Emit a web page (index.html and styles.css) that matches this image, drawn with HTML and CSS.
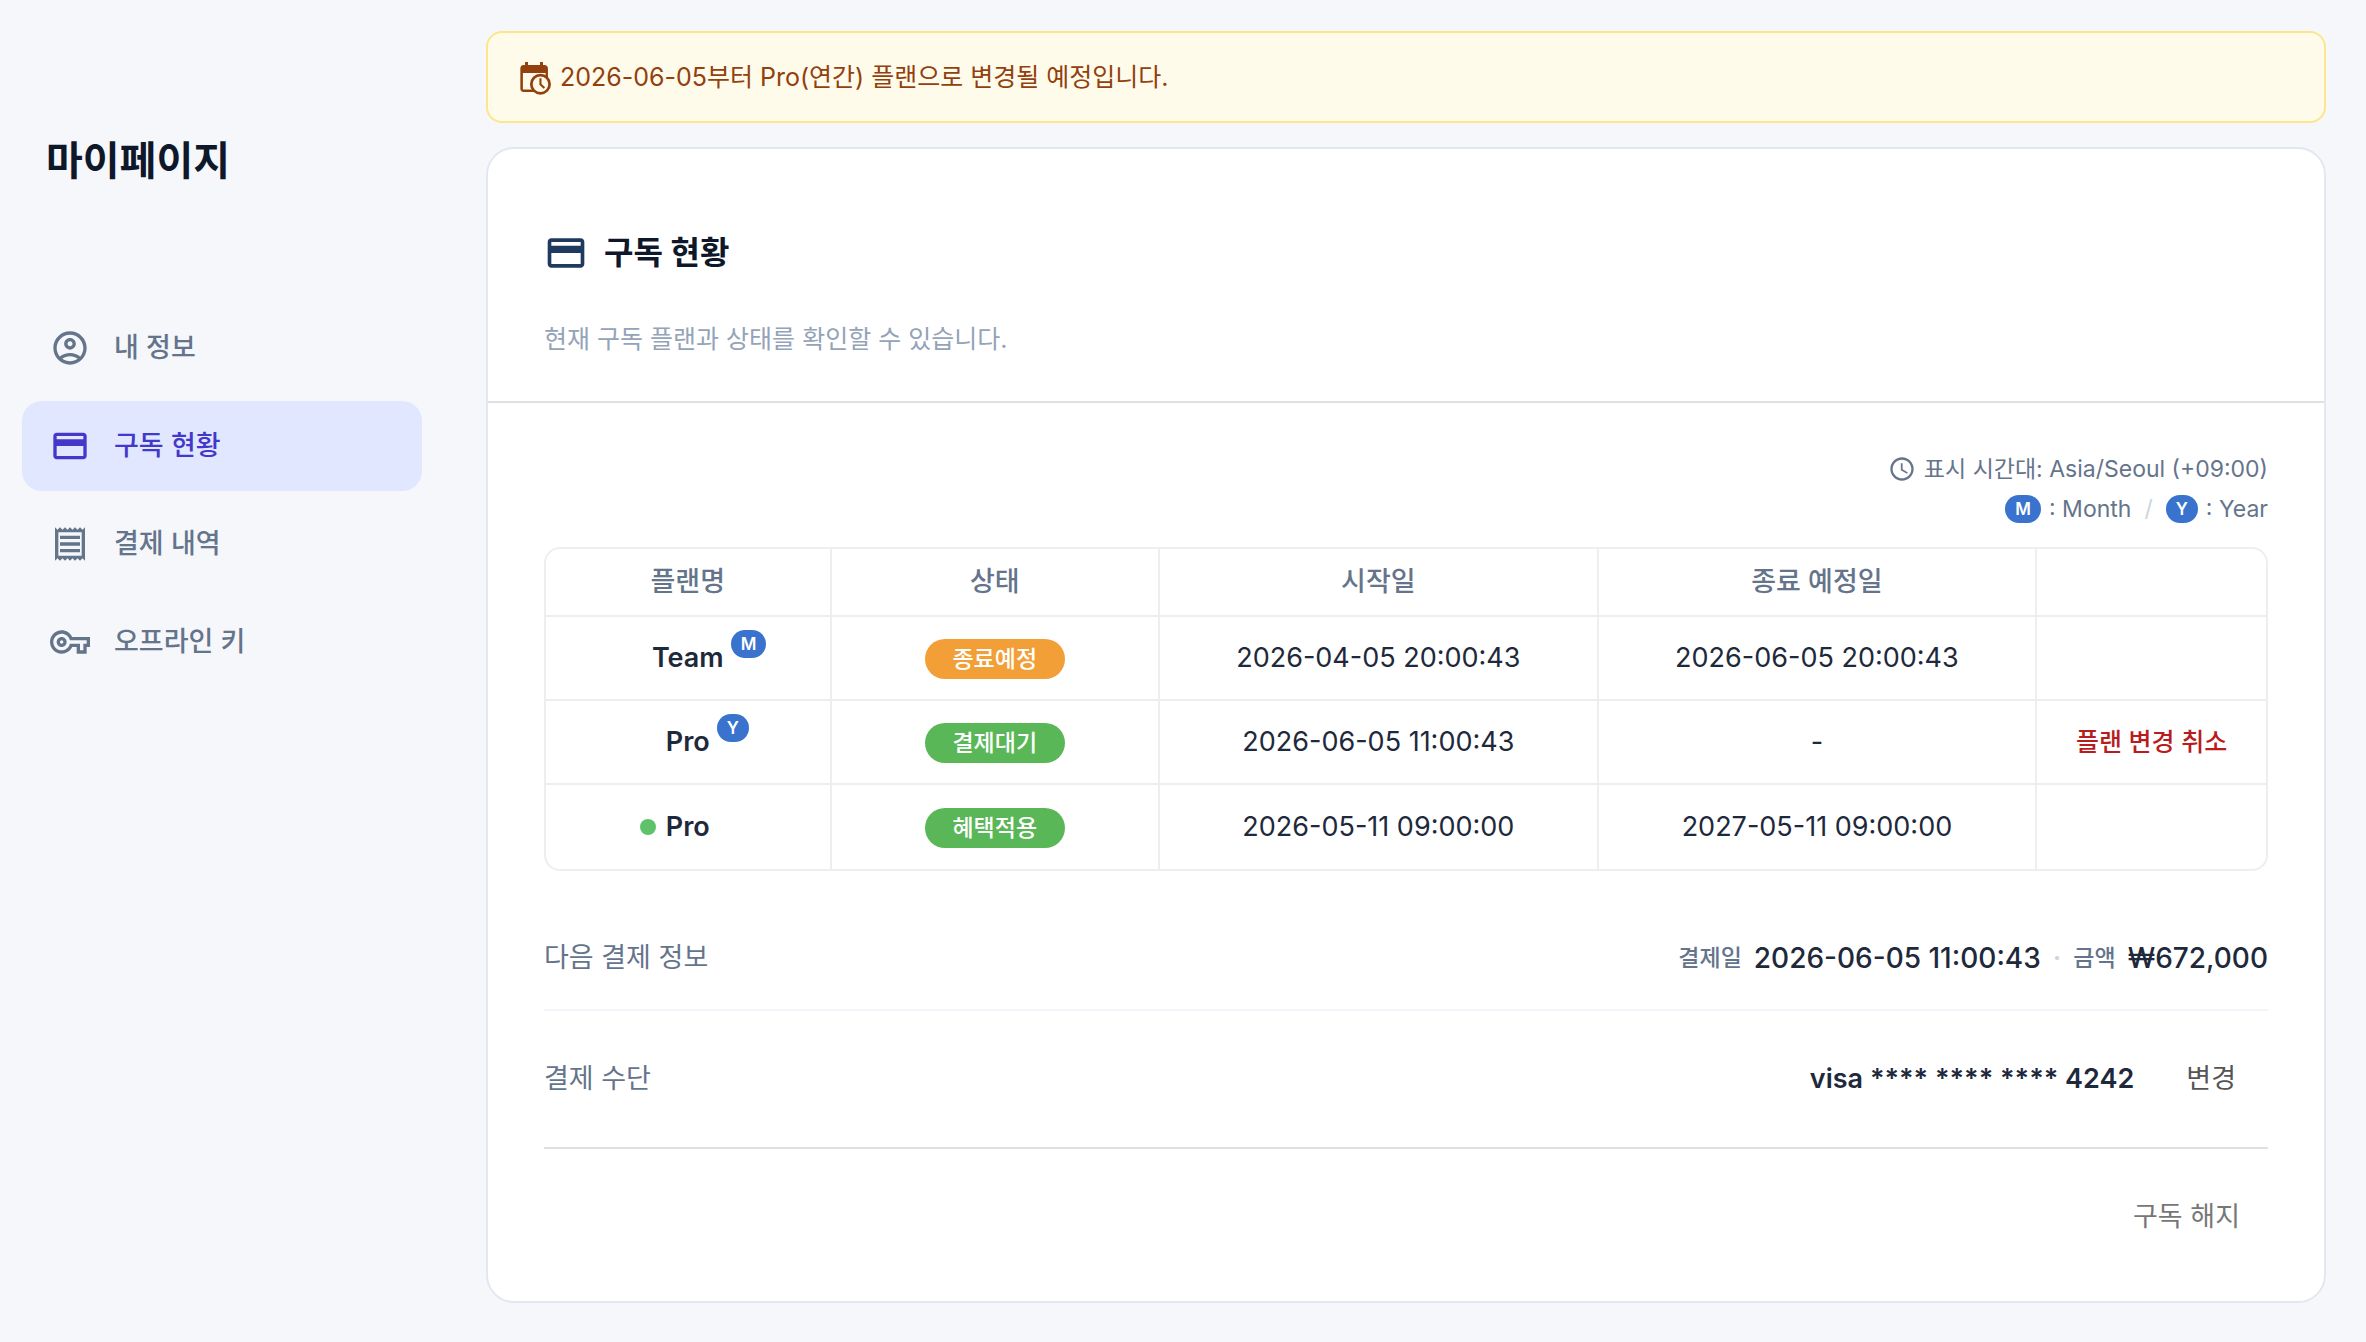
FILE: index.html
```html
<!DOCTYPE html>
<html lang="ko">
<head>
    <meta charset="UTF-8">
    <meta name="viewport" content="width=device-width, initial-scale=1.0">
    <title>마이페이지 - 구독 현황</title>
    <link rel="stylesheet" href="styles.css">
</head>
<body>
    <div class="layout">
        <aside class="sidebar">
            <h1>마이페이지</h1>
            <nav class="menu">
                <a href="#info">
                    <svg viewBox="0 0 24 24"><path d="M12 2C6.48 2 2 6.48 2 12s4.48 10 10 10 10-4.48 10-10S17.52 2 12 2zM7.35 18.5C8.66 17.56 10.26 17 12 17s3.34.56 4.65 1.5C15.34 19.44 13.74 20 12 20s-3.34-.56-4.65-1.5zm10.79-1.38C16.45 15.8 14.32 15 12 15s-4.45.8-6.14 2.12C4.7 15.73 4 13.95 4 12c0-4.42 3.58-8 8-8s8 3.58 8 8c0 1.95-.7 3.73-1.86 5.12z"/><path d="M12 6c-1.93 0-3.5 1.57-3.5 3.5S10.07 13 12 13s3.5-1.57 3.5-3.5S13.93 6 12 6zm0 5c-.83 0-1.5-.67-1.5-1.5S11.17 8 12 8s1.5.67 1.5 1.5S12.83 11 12 11z"/></svg>
                    내 정보
                </a>
                <a href="#subscription" class="active" aria-current="page">
                    <svg viewBox="0 0 24 24"><path d="M20 4H4c-1.11 0-1.99.89-1.99 2L2 18c0 1.11.89 2 2 2h16c1.11 0 2-.89 2-2V6c0-1.11-.89-2-2-2zm0 14H4v-6h16v6zm0-10H4V6h16v2z"/></svg>
                    구독 현황
                </a>
                <a href="#payments">
                    <svg viewBox="0 0 24 24"><path d="M19.5 3.5 18 2l-1.5 1.5L15 2l-1.5 1.5L12 2l-1.5 1.5L9 2 7.5 3.5 6 2 4.5 3.5 3 2v20l1.5-1.5L6 22l1.5-1.5L9 22l1.5-1.5L12 22l1.5-1.5L15 22l1.5-1.5L18 22l1.5-1.5L21 22V2l-1.5 1.5zM19 19.09H5V4.91h14v14.18zM6 15h12v2H6zm0-4h12v2H6zm0-4h12v2H6z"/></svg>
                    결제 내역
                </a>
                <a href="#offline-key">
                    <svg viewBox="0 0 24 24"><path d="M22 19h-6v-4h-2.68c-1.14 2.42-3.6 4-6.32 4-3.86 0-7-3.14-7-7s3.14-7 7-7c2.72 0 5.17 1.58 6.32 4H24v6h-2v4zm-4-2h2v-4h2v-2H11.94l-.23-.67C11.01 8.34 9.11 7 7 7c-2.76 0-5 2.24-5 5s2.24 5 5 5c2.11 0 4.01-1.34 4.71-3.33l.23-.67H18v4zM7 15c-1.65 0-3-1.35-3-3s1.35-3 3-3 3 1.35 3 3-1.35 3-3 3zm0-4c-.55 0-1 .45-1 1s.45 1 1 1 1-.45 1-1-.45-1-1-1z"/></svg>
                    오프라인 키
                </a>
            </nav>
        </aside>

        <main class="content">
            <div class="notice" role="status">
                <svg viewBox="0 0 24 24">
                    <path d="M5 4h1V2h2v2h8V2h2v2h1c1.3 0 2.300 1 2.300 2.200v6.300h-1.600V9.300H4.600v11.100H12V22H5c-1.200 0-2.100-.9-2.100-2.100V6.100C2.900 4.900 3.800 4 5 4z"/>
                    <circle class="clock-face" cx="16.300" cy="16.800" r="6.100"/>
                    <path d="M15.600 12.900H17v3.700l2.400 2.300-1 1-2.800-2.700z"/>
                </svg>
                2026-06-05부터 Pro(연간) 플랜으로 변경될 예정입니다.
            </div>

            <section class="card">
                <div class="card-header">
                    <h2>
                        <svg viewBox="0 0 24 24"><path d="M20 4H4c-1.11 0-1.99.89-1.99 2L2 18c0 1.11.89 2 2 2h16c1.11 0 2-.89 2-2V6c0-1.11-.89-2-2-2zm0 14H4v-6h16v6zm0-10H4V6h16v2z"/></svg>
                        구독 현황
                    </h2>
                    <p>현재 구독 플랜과 상태를 확인할 수 있습니다.</p>
                </div>

                <div class="card-body">
                    <div class="legend">
                        <div class="legend-row">
                            <svg viewBox="0 0 24 24"><path d="M11.99 2C6.47 2 2 6.48 2 12s4.470 10 9.990 10C17.52 22 22 17.52 22 12S17.52 2 11.99 2zM12 20c-4.420 0-8-3.580-8-8s3.580-8 8-8 8 3.580 8 8-3.580 8-8 8zm.5-13H11v6l5.250 3.150.75-1.230-4.500-2.670z"/></svg>
                            표시 시간대: Asia/Seoul (+09:00)
                        </div>
                        <div class="legend-row">
                            <span class="chip">M</span> : Month
                            <span class="slash">/</span>
                            <span class="chip">Y</span> : Year
                        </div>
                    </div>

                    <table class="plans">
                        <colgroup>
                            <col class="col-plan">
                            <col class="col-status">
                            <col class="col-date">
                            <col class="col-date">
                            <col class="col-action">
                        </colgroup>
                        <thead>
                            <tr>
                                <th>플랜명</th>
                                <th>상태</th>
                                <th>시작일</th>
                                <th>종료 예정일</th>
                                <td></td>
                            </tr>
                        </thead>
                        <tbody>
                            <tr>
                                <td><span class="plan">Team<span class="chip">M</span></span></td>
                                <td><span class="badge ending">종료예정</span></td>
                                <td>2026-04-05 20:00:43</td>
                                <td>2026-06-05 20:00:43</td>
                                <td></td>
                            </tr>
                            <tr>
                                <td><span class="plan">Pro<span class="chip">Y</span></span></td>
                                <td><span class="badge">결제대기</span></td>
                                <td>2026-06-05 11:00:43</td>
                                <td>-</td>
                                <td><button type="button" class="cancel-change">플랜 변경 취소</button></td>
                            </tr>
                            <tr>
                                <td><span class="plan"><span class="dot"></span>Pro</span></td>
                                <td><span class="badge">혜택적용</span></td>
                                <td>2026-05-11 09:00:00</td>
                                <td>2027-05-11 09:00:00</td>
                                <td></td>
                            </tr>
                        </tbody>
                    </table>

                    <div class="row next-payment">
                        <span class="label">다음 결제 정보</span>
                        <div class="payment">
                            <small>결제일</small>
                            <span>2026-06-05 11:00:43</span>
                            <span class="sep">·</span>
                            <small>금액</small>
                            <span>₩672,000</span>
                        </div>
                    </div>
                    <div class="row method">
                        <span class="label">결제 수단</span>
                        <div class="method-value">
                            <strong>visa **** **** **** 4242</strong>
                            <button type="button" class="change">변경</button>
                        </div>
                    </div>
                    <div class="card-footer">
                        <button type="button" class="unsubscribe">구독 해지</button>
                    </div>
                </div>
            </section>
        </main>
    </div>
</body>
</html>
```
FILE: styles.css
```css
* {
    box-sizing: border-box;
}
body {
    margin: 0;
    background-color: #f5f7fb;
    color: #1e293b;
    font-family: Inter, "Noto Sans CJK KR", sans-serif;
    font-size: 27px;
    line-height: 40px;
}
svg {
    fill: currentColor;
    flex-shrink: 0;
}
button {
    border: 0;
    padding: 0;
    background: none;
    font-family: inherit;
    cursor: pointer;
}
.layout {
    display: flex;
    min-height: 100vh;
}

/* Sidebar */
.sidebar {
    width: 444px;
    flex-shrink: 0;
    padding: 132px 22px 0;
}
.sidebar h1 {
    margin: 0 0 114px;
    padding: 1px 0 0 24px;
    color: #0f172a;
    font-size: 40px;
    font-weight: 700;
    line-height: 56px;
}
.menu {
    display: flex;
    flex-direction: column;
    gap: 8px;
}
.menu a {
    display: flex;
    align-items: center;
    gap: 24px;
    height: 90px;
    padding: 0 28px;
    border-radius: 20px;
    color: #64748b;
    font-weight: 500;
    text-decoration: none;
}
.menu svg {
    width: 40px;
    height: 40px;
}
.menu a.active {
    background-color: #e0e7ff;
    color: #4338ca;
}

/* Content */
.content {
    flex: 1;
    padding: 31px 40px 38px 42px;
}
.notice {
    display: flex;
    align-items: center;
    gap: 8px;
    height: 92px;
    margin-bottom: 24px;
    padding: 0 28px;
    border: 2px solid #fde68a;
    border-radius: 16px;
    background-color: #fffbeb;
    color: #92400e;
    font-size: 25px;
}
.notice svg {
    width: 36px;
    height: 36px;
}
.clock-face {
    fill: #fffbeb;
    stroke: currentColor;
    stroke-width: 1.8;
}
.card {
    border: 2px solid #e2e8f0;
    border-radius: 28px;
    background-color: white;
}
.card-header {
    padding: 80px 56px 42px;
    border-bottom: 2px solid #e0e0e0;
}
.card-header h2 {
    display: flex;
    align-items: center;
    gap: 16px;
    margin: 0 0 42px;
    color: #0f172a;
    font-size: 32px;
    font-weight: 700;
    line-height: 48px;
}
.card-header h2 svg {
    width: 44px;
    height: 44px;
    color: #1e3a5f;
}
.card-header p {
    margin: 0;
    color: #94a3b8;
    font-size: 25px;
}
.card-body {
    padding: 46px 56px 52px;
}
.legend {
    display: flex;
    flex-direction: column;
    align-items: flex-end;
    margin-bottom: 18px;
    color: #64748b;
    font-size: 23px;
}
.legend-row {
    display: flex;
    align-items: center;
    gap: 8px;
}
.legend-row svg {
    width: 28px;
    height: 28px;
}
.slash {
    padding: 0 5px;
    color: #cbd5e1;
}
.chip {
    padding: 0 10px;
    border-radius: 14px;
    background-color: #3973cd;
    color: white;
    font-size: 17px;
    font-weight: 600;
    line-height: 28px;
}

/* Plan table */
.plans {
    width: 100%;
    table-layout: fixed;
    border: 2px solid #eee;
    border-radius: 16px;
    border-spacing: 0;
    text-align: center;
}
.col-plan {
    width: 16.6%;
}
.col-status {
    width: 19.1%;
}
.col-date {
    width: 25.5%;
}
.col-action {
    width: 13.3%;
}
.plans th,
.plans td {
    height: 84px;
    padding: 0;
    border-right: 2px solid #eee;
    border-bottom: 2px solid #eee;
}
.plans thead th,
.plans thead td {
    height: 68px;
}
.plans th {
    color: #64748b;
    font-weight: 500;
}
.plans tr > :last-child {
    border-right: 0;
}
.plans tbody tr:last-child td {
    border-bottom: 0;
}
.plan {
    position: relative;
    font-weight: 600;
}
.plan .chip {
    position: absolute;
    top: -11px;
    left: 100%;
    margin-left: 7px;
}
.dot {
    position: absolute;
    top: 9px;
    right: 100%;
    width: 16px;
    height: 16px;
    margin-right: 10px;
    border-radius: 50%;
    background-color: #5dc26a;
}
.badge {
    display: inline-block;
    width: 140px;
    border-radius: 20px;
    background-color: #5ab757;
    color: white;
    font-size: 23px;
    font-weight: 500;
    vertical-align: middle;
}
.badge.ending {
    background-color: #f29f38;
}
.cancel-change {
    color: #b91c1c;
    font-size: 25px;
    font-weight: 500;
}

/* Payment info */
.row {
    display: flex;
    align-items: center;
    justify-content: space-between;
}
.label {
    color: #64748b;
}
.next-payment {
    margin-top: 36px;
    height: 104px;
    border-bottom: 2px solid #f1f5f9;
}
.payment {
    display: flex;
    align-items: center;
    gap: 12px;
    font-size: 28px;
    font-weight: 500;
}
.payment small {
    color: #64748b;
    font-size: 23px;
}
.payment .sep {
    color: #cbd5e1;
}
.method {
    height: 138px;
    border-bottom: 2px solid #e0e0e0;
}
.method-value {
    display: flex;
    align-items: center;
    gap: 20px;
}
.method-value strong {
    font-weight: 600;
}
.change,
.unsubscribe {
    padding: 12px 32px;
    color: #555;
    font-size: 27px;
    line-height: 40px;
}
.card-footer {
    display: flex;
    justify-content: flex-end;
    padding-top: 36px;
}
.unsubscribe {
    padding: 12px 28px;
    color: #777;
}
```
